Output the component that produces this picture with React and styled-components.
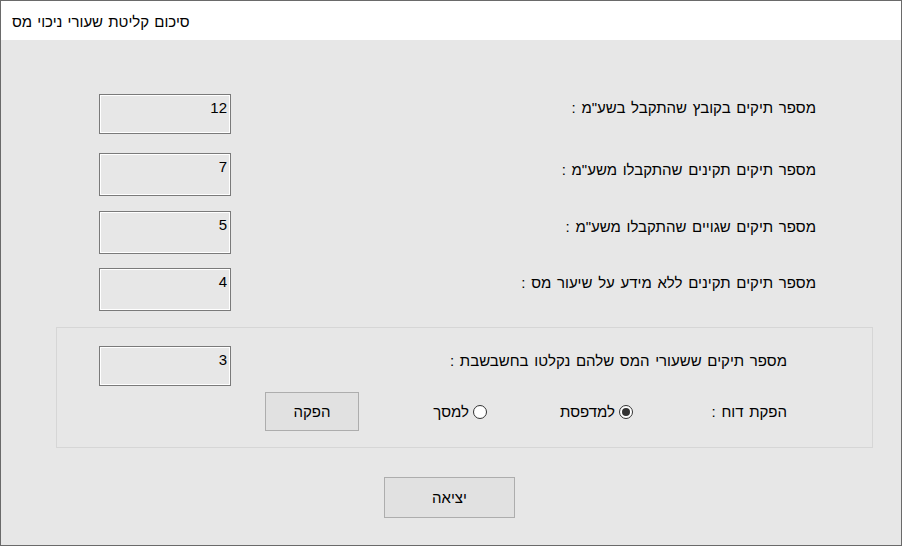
import React from "react";
import styled, { createGlobalStyle } from "styled-components";

const Global = createGlobalStyle`
  html, body { margin: 0; padding: 0; background: #ffffff; }
  body { font-family: "Liberation Sans", "DejaVu Sans", sans-serif; }
  * { box-sizing: border-box; }
`;

const Window = styled.div`
  width: 902px;
  height: 546px;
  border: 1px solid #6a6a6a;
  display: flex;
  flex-direction: column;
  background: #e7e7e7;
  overflow: hidden;
`;

const TitleBar = styled.div`
  height: 39px;
  flex: none;
  background: #ffffff;
  display: flex;
  align-items: center;
  padding-left: 11px;
  font-size: 15px;
  color: #000;
  direction: rtl;
  justify-content: flex-end;
`;

const TitleText = styled.span`
  margin-top: 1px;
  word-spacing: 1px;
`;

const Body = styled.div`
  flex: 1;
  direction: rtl;
  display: flex;
  flex-direction: column;
  padding-top: 54px;
`;

const Row = styled.div`
  height: ${(p) => p.$h}px;
  display: flex;
  align-items: flex-start;
  justify-content: space-between;
  padding-right: ${(p) => p.$pr}px;
  padding-left: ${(p) => p.$pl}px;
`;

const Label = styled.div`
  font-size: 15px;
  color: #000;
  white-space: nowrap;
  word-spacing: 1.5px;
  margin-top: ${(p) => p.$mt || 5}px;
`;

const ValueBox = styled.div`
  width: 132px;
  height: ${(p) => p.$h}px;
  border: 1px solid #7a7a7a;
  box-shadow: inset 0 0 0 1px #ffffff;
  background: #e7e7e7;
  direction: ltr;
  text-align: right;
  font-size: 15px;
  padding: 4px 3px 0 0;
  color: #000;
`;

const Group = styled.div`
  margin: 0 28px 0 55px;
  height: 121px;
  border: 1px solid #d6d6d6;
  display: flex;
  flex-direction: column;
  padding-top: 18px;
`;

const OptionsRow = styled.div`
  display: flex;
  align-items: center;
  padding-right: 85px;
  margin-top: 6px;
`;

const Cell = styled.div`
  width: ${(p) => p.$w}px;
  flex: none;
  display: flex;
  align-items: center;
  font-size: 15px;
  color: #000;
  white-space: nowrap;
  word-spacing: 1.5px;
`;

const RadioCircle = styled.span`
  width: 14px;
  height: 14px;
  border-radius: 50%;
  border: 1px solid #333333;
  background: #ffffff;
  display: inline-flex;
  align-items: center;
  justify-content: center;
  margin-left: 4px;
  flex: none;
  &::after {
    content: "";
    width: 8px;
    height: 8px;
    border-radius: 50%;
    background: #333333;
    display: ${(p) => (p.$checked ? "block" : "none")};
  }
`;

const Button = styled.button`
  width: ${(p) => p.$w}px;
  height: ${(p) => p.$h}px;
  background: #e1e1e1;
  border: 1px solid #adadad;
  font-family: "Liberation Sans", "DejaVu Sans", sans-serif;
  font-size: 15px;
  color: #000;
  padding: 0;
  flex: none;
`;

const Footer = styled.div`
  display: flex;
  justify-content: center;
  padding-top: 29px;
  padding-right: 3px;
`;

const rows = [
  { label: "מספר תיקים בקובץ שהתקבל בשע\"מ :", value: "12", h: 59, box: 40, mt: 5 },
  { label: "מספר תיקים תקינים שהתקבלו משע\"מ :", value: "7", h: 58, box: 43, mt: 8 },
  { label: "מספר תיקים שגויים שהתקבלו משע\"מ :", value: "5", h: 57, box: 43, mt: 7 },
  { label: "מספר תיקים תקינים ללא מידע על שיעור מס :", value: "4", h: 59, box: 43, mt: 6 },
];

export default function App() {
  return (
    <>
      <Global />
      <Window>
        <TitleBar>
          <TitleText>סיכום קליטת שעורי ניכוי מס</TitleText>
        </TitleBar>
        <Body>
          {rows.map((r) => (
            <Row key={r.label} $h={r.h} $pr={85} $pl={98}>
              <Label $mt={r.mt}>{r.label}</Label>
              <ValueBox $h={r.box}>{r.value}</ValueBox>
            </Row>
          ))}
          <Group>
            <Row $h={40} $pr={85} $pl={42}>
              <Label $mt={6}>מספר תיקים ששעורי המס שלהם נקלטו בחשבשבת :</Label>
              <ValueBox $h={40}>3</ValueBox>
            </Row>
            <OptionsRow>
              <Cell $w={154}>הפקת דוח :</Cell>
              <Cell $w={146}>
                <RadioCircle $checked />
                למדפסת
              </Cell>
              <Cell $w={128}>
                <RadioCircle />
                למסך
              </Cell>
              <Button $w={94} $h={39}>הפקה</Button>
            </OptionsRow>
          </Group>
          <Footer>
            <Button $w={131} $h={41}>יציאה</Button>
          </Footer>
        </Body>
      </Window>
    </>
  );
}
